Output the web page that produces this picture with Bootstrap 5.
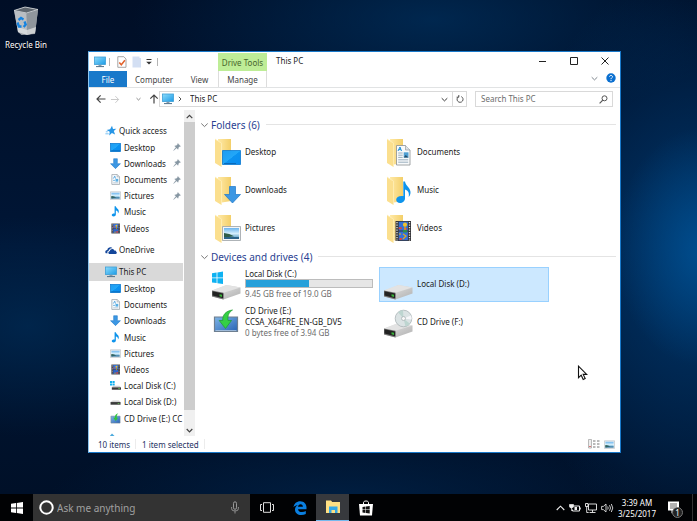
<!DOCTYPE html>
<html lang="en">
<head>
<meta charset="utf-8">
<meta name="viewport" content="width=device-width, initial-scale=1">
<title>This PC</title>
<link href="https://cdn.jsdelivr.net/npm/bootstrap@5.3.0/dist/css/bootstrap.min.css" rel="stylesheet">
<style>
html, body { height: 100%; }
body { font: 8px/11px "Noto Sans", "Open Sans", sans-serif; color: #1b1b1b; background: #001330; }
svg { display: block; flex: none; }
button, input { font: inherit; color: inherit; }
button { background: none; border: 0; padding: 0; }
a { color: inherit; text-decoration: none; }
ul { list-style: none; margin: 0; padding: 0; }
.desktop {
  background:
    radial-gradient(ellipse 90px 120px at 101% 50%, rgba(0,92,165,.6), transparent),
    radial-gradient(ellipse 190px 290px at 100% 52%, rgba(0,66,126,.75), transparent),
    radial-gradient(ellipse 300px 110px at 62% 4%, rgba(0,52,100,.65), transparent),
    radial-gradient(ellipse 170px 110px at 4% 66%, rgba(0,48,92,.6), transparent),
    radial-gradient(ellipse 300px 70px at 50% 101%, rgba(0,40,82,.6), transparent),
    linear-gradient(#000e26, #001636 50%, #001028);
}
.bin { width: 48px; left: 2px; top: 6px; gap: 1px; color: #fff; text-shadow: 0 1px 1px #000; }
.win { left: 88px; top: 51px; right: 76px; bottom: 41px; background: #fff; border: 1px solid #1979ca; border-left-color: #8cc5ef; }
.ribbon { height: 36px; border-bottom: 1px solid #e1e3e4; }
.quickbar { height: 19px; padding-left: 5px; gap: 5px; }
.sep { width: 1px; height: 8px; background: #b4b4b4; }
.quickbar .first { margin: 0 2px 0 -2px; }
.ribtabs { height: 16px; color: #444; }
.tab-file { width: 38px; background: #1979ca; color: #fff; }
.tab-plain { width: 54px; }
.tab-short { width: 37px; }
.tools { width: 49px; color: #47652c; }
.tools .cap { height: 18px; margin-top: 1px; background: #beed97; }
.tools .low { height: 16px; color: #444; border: solid #ddd; border-width: 0 1px; }
.wintitle { height: 17px; padding-left: 9px; }
.winbtn { width: 31px; height: 17px; }
.addr { height: 22px; padding: 0 7px 0 7px; }
.history { color: #444; }
.box { height: 16px; border: 1px solid #d9d9d9; }
.box input { border: 0; outline: 0; background: none; min-width: 0; padding: 0 0 1px; }
.box input::placeholder { color: #6d6d6d; opacity: 1; }
.place { margin-left: 2px; }
.search { width: 138px; margin-left: 8px; padding: 0 4px 0 5px; }
.refresh { width: 14px; border-left: 1px solid #d9d9d9; }
.side { width: 106px; }
.tree { padding-top: 12px; }
.tree li { min-height: 0; }
.tree a { padding: 0 2px 0 21px; gap: 3px; white-space: nowrap; height: 100%; overflow: hidden; }
.tree .top a { padding-left: 16px; gap: 2px; }
.tree .on { background: #d9d9d9; }
.tree .spaced { margin-top: 5px; }
.peek { height: 10px; overflow: hidden; padding: 6px 0 0 20px; }
.bar { width: 11px; background: #f0f0f0; margin-left: 1px; }
.thumb { background: #cdcdcd; margin-bottom: 14px; }
.arrow { height: 12px; }
.files { padding: 4px 4px 0 5px; }
.head { height: 21px; font-size: 10px; line-height: 20px; color: #2b3f92; gap: 2px; font-weight: 400; margin: 0; }
.rule { height: 1px; background: #e4e4e4; margin-left: 4px; }
.tiles { display: grid; grid-template-columns: repeat(auto-fill, 170px); gap: 3px 2px; padding-left: 7px; }
.tile { height: 35px; padding: 0 3px; gap: 4px; border: 1px solid transparent; text-align: left; min-width: 0; }
.tile.on { background: #cce8ff; border-color: #99d1ff; }
.tile .txt { min-width: 0; white-space: nowrap; padding-bottom: 2px; }
.tile .muted { color: #6d6d6d; }
.usage { height: 9px; border: 1px solid #bcbcbc; border-radius: 0; background: #e6e6e6; width: 128px; }
.usage .progress-bar { background: #26a0da; }
.status { height: 16px; padding: 0 5px 0 9px; color: #1e3264; }
.status .sep { background: #ececec; margin: 0 6px 0 5px; height: 10px; }
.taskbar { height: 27px; background: #010204; color: #fff; }
.tb { width: 33px; }
.tb.on { background: #37393d; border-bottom: 1px solid #76b9ed; }
.cortana { width: 217px; background: #333; padding: 0 11px 0 6px; gap: 3px; color: #a0a0a0; font-size: 10px; line-height: 16px; }
.cortana input { border: 0; outline: 0; background: none; padding: 0; min-width: 0; height: 18px; }
.cortana input::placeholder { color: #a0a0a0; opacity: 1; line-height: 16px; }
.tray { gap: 4px; }
.clock { width: 46px; text-align: center; margin-left: -4px; }
.notify { width: 24px; padding-left: 4px; }
.peekdesk { width: 5px; border-left: 1px solid #333; }
.count { left: 8px; top: 13px; width: 11px; height: 11px; border-radius: 50%; background: #222; border: 1px solid #777; line-height: 9px; text-align: center; }
.cursor { left: 577px; top: 365px; pointer-events: none; }
</style>
<script src="https://cdn.jsdelivr.net/npm/bootstrap@5.3.0/dist/js/bootstrap.bundle.min.js"></script>
</head>
<body>
<svg width="0" height="0" class="position-absolute" aria-hidden="true">
  <defs>
    <linearGradient id="gScreen" x1="0" y1="0" x2="1" y2="1"><stop offset="0" stop-color="#1e9cf0"/><stop offset=".5" stop-color="#22a7f8"/><stop offset=".52" stop-color="#0c93f0"/><stop offset="1" stop-color="#0a8cf0"/></linearGradient>
    <linearGradient id="gMon" x1="0" y1="0" x2="1" y2="1"><stop offset="0" stop-color="#8ddcfb"/><stop offset="1" stop-color="#1c9be6"/></linearGradient>
    <linearGradient id="gFold" x1="0" y1="0" x2="1" y2="0"><stop offset="0" stop-color="#ffe9a6"/><stop offset="1" stop-color="#f3cf69"/></linearGradient>
    <linearGradient id="gDrive" x1="0" y1="0" x2="1" y2="1"><stop offset="0" stop-color="#e9e9e9"/><stop offset="1" stop-color="#b0b0b0"/></linearGradient>
    <linearGradient id="gPic" x1="0" y1="0" x2="0" y2="1"><stop offset="0" stop-color="#6cb5ee"/><stop offset=".5" stop-color="#d4eefc"/><stop offset="1" stop-color="#3b8ab8"/></linearGradient>
    <linearGradient id="gBox" x1="0" y1="0" x2="1" y2="1"><stop offset="0" stop-color="#7fb5e6"/><stop offset="1" stop-color="#2763b5"/></linearGradient>
    <symbol id="pc" viewBox="0 0 12 11"><rect x=".5" y=".5" width="11" height="7.5" fill="url(#gMon)" stroke="#3c9fd6" stroke-width=".8"/><path d="M4.5 8.4h3v1.2h-3z" fill="#8b9ba8"/><path d="M2 9.6h8v1H2z" fill="#4f6f87"/></symbol>
    <symbol id="desk" viewBox="0 0 12 12"><rect x=".5" y="1.5" width="11" height="9" fill="url(#gScreen)" stroke="#0b78cf" stroke-width=".8"/><path d="M1 9.6h10" stroke="#0861ad" stroke-width=".8"/></symbol>
    <symbol id="down" viewBox="0 0 12 12"><path d="M4 .8h4v5.4h3.4L6 11.6.6 6.200H4z" fill="#3c97e3" stroke="#1c77c8" stroke-width=".6"/></symbol>
    <symbol id="doc" viewBox="0 0 12 12"><path d="M2 .6h6l2.400 2.400v8.400H2z" fill="#f7fafc" stroke="#8d959b" stroke-width=".7"/><path d="M7.800.6v2.600h2.600" fill="#dfe5e9" stroke="#8d959b" stroke-width=".5"/><path d="M3.600 5 5.200 2.400 6 5M3.500 7h1.800" stroke="#3092d8" stroke-width=".8" fill="none"/><path d="M6 5.300h3v3H6z" fill="#58aee4"/><path d="M3.500 9.600h5.500" stroke="#9cb4c6" stroke-width=".7"/></symbol>
    <symbol id="pic" viewBox="0 0 12 12"><path d="M.4 2h11.200v8.200H.4z" fill="#f4f6f7" stroke="#a9afb3" stroke-width=".6"/><path d="M1.500 3h9v6.200h-9z" fill="url(#gPic)"/><path d="M1.500 6.500q3 .2 5.500 1.600l-5.500 1.100z" fill="#2f5d49"/><path d="M1.500 8.700h9" stroke="#2f6c94" stroke-width=".9"/></symbol>
    <symbol id="note" viewBox="0 0 12 12"><path d="M5 .4h1.400c.2 2.300 3.600 2.900 3.200 5.900-.1.800-.5 1.500-1 2 .5-2-.6-2.900-2.200-3.300v4.300c0 1.300-1.200 2.200-2.500 2.200-1.200 0-2-.7-2-1.600C1.900 8.700 3.300 8 5 8.200z" fill="#0e94ec"/></symbol>
    <symbol id="vid" viewBox="0 0 12 12"><path d="M1.500.6h9.400v10.800H1.500z" fill="#3c3c40"/><path d="M2.500 1v10.200M9.900 1v10.200" stroke="#d7d7d7" stroke-width=".8" stroke-dasharray=".8 .9"/><path d="M3.500 1.100h5.400v4.700H3.500z" fill="#3a74d8"/><path d="M3.500 6.300h5.400v4.600H3.500z" fill="#2d62cc"/><path d="M3.500 3.800h1.700v1H3.500zM6.800 9h2v1.500h-2z" fill="#d84b3b"/><circle cx="7" cy="3" r="1.100" fill="#f0c22e"/><path d="M7 4.200v2.600M4.500 10h2" stroke="#c79a20" stroke-width=".9"/></symbol>
    <symbol id="drv" viewBox="0 0 12 12"><path d="M.6 6.600 3 4.800h6.600l1.900 1.800z" fill="#d2d2d2"/><path d="M.6 6.600h10.900v2.900H.6z" fill="#3a3a3a"/><path d="M8.400 7.700h1.800v.8H8.400z" fill="#67d352"/></symbol>
    <symbol id="drvw" viewBox="0 0 12 12"><path d="M0 1h2.300v2.200H0zM2.800 1h2.300v2.200H2.800zM0 3.700h2.300v2.200H0zM2.800 3.700h2.300v2.200H2.800z" fill="#10b0ee"/><path d="M2 8 3.500 6.400h6.700L12 8z" fill="#cfcfcf"/><path d="M2 8h10v2.600H2z" fill="#3a3a3a"/><path d="M9 9h1.800v.7H9z" fill="#67d352"/></symbol>
    <symbol id="cd" viewBox="0 0 12 12"><path d="M1 3.400h10V11H1z" fill="url(#gBox)" stroke="#7d8a96" stroke-width=".6"/><path d="M9 .4C6 1 5.300 3 5.300 5.300H3.500l2.700 3.400 2.600-3.400H7.300C7.200 3.200 7.600 1.600 9 .4z" fill="#2fc63b"/></symbol>
    <symbol id="star" viewBox="0 0 12 12"><path d="m7 .8 1 3.100 3.300-.1-2.500 2.300 1.300 3.500-3.200-1.700-2.700 2.500.5-3.600L1.600 5l3.500-.7z" fill="#2796e6"/><path d="M.4 8.800h3.300M.8 6.800h2" stroke="#5ab4f2" stroke-width=".8"/></symbol>
    <symbol id="cloud" viewBox="0 0 13 12"><path d="M.8 9.600C-.5 7.500 1 5.800 2.500 5.900 2.700 3 6.700 1.800 8.200 4.100 4.900 3.700 4.400 6.300 4.400 6.500 2.300 6.800 2.200 8.700 3 9.600z" fill="#13469a"/><path d="M4.300 10.200C2.900 8.800 4 7.100 5.300 7.300 5.500 4.500 9.200 4.200 10 6.500c1.600-.3 2.200.6 2.200 1.500 1 .5.800 2.200-.6 2.200z" fill="#13469a"/></symbol>
    <symbol id="pin" viewBox="0 0 8 8"><path d="M4.800.5 7.500 3.200 6.600 3.400 5.300 4.800 5.100 6.300 3.500 4.900.6 7.500 3 4.300 1.700 2.900 3.200 2.700 4.600 1.400z" fill="#8696a2" stroke="#8696a2" stroke-width=".4"/></symbol>
    <symbol id="fold" viewBox="0 0 30 32"><path d="M7 2h13v24l-12 2z" fill="url(#gFold)"/><path d="M4 2l6.500 4.200V30L4 26z" fill="#fbdf8e"/><path d="M4 2l6.500 4.200V30" fill="none" stroke="#fff0bd" stroke-width=".7"/></symbol>
    <symbol id="hdd" viewBox="0 0 30 32"><path d="M1 21.500 15.500 16 29.500 18.500V24.500L12.500 30.500 1 27.500z" fill="url(#gDrive)"/><path d="M1 21.500 15.500 16 29.500 18.500 12.500 23.800z" fill="#e3e3e3"/><path d="M1 21.500 12.500 23.800V30.500L1 27.500z" fill="#777"/><path d="M1.500 22.300 12.200 24.600V29.300L1.500 26.600z" fill="#222"/><path d="M8.500 25.200 11 25.800V27.900L8.500 27.200z" fill="#38b338"/></symbol>
    <symbol id="chev" viewBox="0 0 8 8"><path d="M.8 2.500 4 5.600 7.200 2.500" fill="none" stroke="currentColor" stroke-width="1"/></symbol>
    <symbol id="arr" viewBox="0 0 10 10"><path d="M9.500 5H1M4.600 1.300 1 5l3.600 3.700" fill="none" stroke="currentColor" stroke-width="1.200"/></symbol>
    <symbol id="folder-bar" viewBox="0 0 16 14"><path d="M1 .5h5l1.200 1.400H15v11H1z" fill="#ffe083"/><path d="M4 6.500h8.500v6.500H10V10H6.500v3H4z" fill="#35a8e6"/></symbol>
  </defs>
</svg>

<div class="vh-100 d-flex flex-column overflow-hidden">
<main class="desktop flex-grow-1 position-relative">
  <a href="#" class="bin position-absolute d-flex flex-column align-items-center">
    <svg width="28" height="32" viewBox="0 0 28 32"><path d="M2 4.500 13 1 26 3.500 23 28 9.500 29 6 26z" fill="#9da3aa"/><path d="M2 4.500 13 1 26 3.500 14.500 7z" fill="#5e666e" stroke="#d5d9dc" stroke-width=".8"/><path d="M2.300 5 14.500 7.500 16 29 6 26z" fill="#b9bec3"/><path d="M14.500 7.500 26 4 23 27 15 29z" fill="#8f969d"/><path d="M5.800 21 15 24 24 21 23 27 15 29 6 26z" fill="#dfe1e3" opacity=".75"/><path d="m6.500 14 2.500-2 2.500 1.500M5.500 16.500 7 20.500h2.500M12.500 15.500l1.200 3-2 2.500" fill="none" stroke="#1583e0" stroke-width="2.300"/></svg>
    <span class="text-nowrap">Recycle Bin</span>
  </a>

  <section class="win position-absolute d-flex flex-column" aria-label="This PC">
    <header class="ribbon d-flex">
      <div class="d-flex flex-column">
        <div class="quickbar d-flex align-items-center">
          <svg width="12" height="12"><use href="#pc"/></svg>
          <span class="sep first"></span>
          <button type="button" aria-label="Properties"><svg width="10" height="12" viewBox="0 0 10 12"><path d="M.8.700h6L9 3v8.300H.8z" fill="#fff" stroke="#8f8f8f" stroke-width=".8"/><path d="m2.300 6.500 2 2.300 3.600-4.600" fill="none" stroke="#e2622c" stroke-width="1.500"/></svg></button>
          <button type="button" aria-label="New folder"><svg width="9" height="12" viewBox="0 0 9 12"><path d="M.5.500h7V2H9v9.500H.5z" fill="#d3dff3"/></svg></button>
          <button type="button" aria-label="Customize"><svg width="6" height="8" viewBox="0 0 6 8"><path d="M.5 1.500h5" stroke="#333"/><path d="M.2 3.800h5.600L3 6.500z" fill="#333"/></svg></button>
          <span class="sep"></span>
        </div>
        <nav class="ribtabs d-flex text-center">
          <button type="button" class="tab-file">File</button>
          <button type="button" class="tab-plain">Computer</button>
          <button type="button" class="tab-short">View</button>
        </nav>
      </div>
      <div class="tools text-center d-flex flex-column">
        <div class="cap d-flex align-items-center justify-content-center">Drive Tools</div>
        <button type="button" class="low">Manage</button>
      </div>
      <div class="flex-grow-1 d-flex flex-column justify-content-between">
        <div class="wintitle d-flex align-items-center">
          <span class="flex-grow-1">This PC</span>
          <button type="button" class="winbtn d-flex align-items-center justify-content-center" aria-label="Minimize"><svg width="8" height="8"><path d="M0 4.500h7" stroke="#222"/></svg></button>
          <button type="button" class="winbtn d-flex align-items-center justify-content-center" aria-label="Maximize"><svg width="8" height="8"><path d="M.5.500h7v7h-7z" fill="none" stroke="#222"/></svg></button>
          <button type="button" class="winbtn d-flex align-items-center justify-content-center" aria-label="Close"><svg width="8" height="8"><path d="m.5.500 7 7m0-7-7 7" stroke="#222"/></svg></button>
        </div>
        <div class="d-flex justify-content-end align-items-center gap-2 h-50 text-secondary">
          <button type="button" aria-label="Collapse ribbon"><svg width="7" height="7"><use href="#chev"/></svg></button>
          <button type="button" class="me-1" aria-label="Help"><svg width="10" height="10" viewBox="0 0 10 10"><circle cx="5" cy="5" r="4.700" fill="#0a6fd0"/><path d="M3.600 3.800c0-2 2.900-1.700 2.900 0C6.500 4.800 5 4.800 5 6.200M5 7v1.100" stroke="#fff" fill="none"/></svg></button>
        </div>
      </div>
    </header>

    <div class="addr d-flex align-items-center">
      <div class="history d-flex align-items-center">
        <button type="button" aria-label="Back"><svg width="10" height="10"><use href="#arr"/></svg></button>
        <button type="button" aria-label="Forward" class="ms-1"><svg width="10" height="9" color="#c4c4c4" viewBox="0 0 10 10"><path d="M.5 5H9M5.400 1.300 9 5 5.400 8.700" fill="none" stroke="currentColor"/></svg></button>
        <button type="button" aria-label="Recent" class="ms-3 me-2"><svg width="5" height="6"><use href="#chev"/></svg></button>
        <button type="button" aria-label="Up"><svg width="10" height="10" viewBox="0 0 10 10"><path d="M5 9.500V1M1.300 4.600 5 1l3.700 3.600" fill="none" stroke="#444" stroke-width="1.200"/></svg></button>
      </div>
      <div class="box flex-grow-1 d-flex align-items-center">
        <svg class="place" width="12" height="12"><use href="#pc"/></svg>
        <svg class="mx-1" width="4" height="6" viewBox="0 0 4 6"><path d="m.8.800 2.200 2.200L.8 5.200" fill="none" stroke="#555"/></svg>
        <input type="text" class="flex-grow-1 ms-1" value="This PC" aria-label="Address">
        <button type="button" class="me-1" aria-label="Previous locations"><svg width="7" height="7"><use href="#chev"/></svg></button>
        <button type="button" class="refresh h-100 d-flex align-items-center justify-content-center" aria-label="Refresh"><svg width="8" height="8" viewBox="0 0 8 8"><path d="M5.300 1.600A3 3 0 1 1 2.600 1.700M2.800 0v2.200H.6" fill="none" stroke="#555"/></svg></button>
      </div>
      <div class="box search d-flex align-items-center">
        <input type="search" class="flex-grow-1" placeholder="Search This PC" aria-label="Search This PC">
        <svg width="9" height="9" viewBox="0 0 9 9"><circle cx="5.500" cy="3.300" r="2.500" fill="none" stroke="#555"/><path d="M3.800 5.200.6 8.400" stroke="#555" stroke-width="1.200"/></svg>
      </div>
    </div>

    <div class="flex-grow-1 d-flex overflow-hidden">
      <aside class="side d-flex flex-shrink-0">
        <div class="flex-grow-1 d-flex flex-column overflow-hidden">
          <ul class="tree flex-grow-1 d-flex flex-column">
            <li class="top flex-fill"><a href="#" class="d-flex align-items-center"><svg width="12" height="12"><use href="#star"/></svg>Quick access</a></li>
            <li class="flex-fill"><a href="#" class="d-flex align-items-center"><svg width="11" height="11"><use href="#desk"/></svg><span class="flex-grow-1">Desktop</span><svg width="8" height="8"><use href="#pin"/></svg></a></li>
            <li class="flex-fill"><a href="#" class="d-flex align-items-center"><svg width="11" height="11"><use href="#down"/></svg><span class="flex-grow-1">Downloads</span><svg width="8" height="8"><use href="#pin"/></svg></a></li>
            <li class="flex-fill"><a href="#" class="d-flex align-items-center"><svg width="11" height="11"><use href="#doc"/></svg><span class="flex-grow-1">Documents</span><svg width="8" height="8"><use href="#pin"/></svg></a></li>
            <li class="flex-fill"><a href="#" class="d-flex align-items-center"><svg width="11" height="11"><use href="#pic"/></svg><span class="flex-grow-1">Pictures</span><svg width="8" height="8"><use href="#pin"/></svg></a></li>
            <li class="flex-fill"><a href="#" class="d-flex align-items-center"><svg width="11" height="11"><use href="#note"/></svg>Music</a></li>
            <li class="flex-fill"><a href="#" class="d-flex align-items-center"><svg width="11" height="11"><use href="#vid"/></svg>Videos</a></li>
            <li class="top spaced flex-fill"><a href="#" class="d-flex align-items-center"><svg width="12" height="12"><use href="#cloud"/></svg>OneDrive</a></li>
            <li class="top spaced flex-fill on"><a href="#" class="d-flex align-items-center" aria-current="page"><svg width="12" height="12"><use href="#pc"/></svg>This PC</a></li>
            <li class="flex-fill"><a href="#" class="d-flex align-items-center"><svg width="11" height="11"><use href="#desk"/></svg>Desktop</a></li>
            <li class="flex-fill"><a href="#" class="d-flex align-items-center"><svg width="11" height="11"><use href="#doc"/></svg>Documents</a></li>
            <li class="flex-fill"><a href="#" class="d-flex align-items-center"><svg width="11" height="11"><use href="#down"/></svg>Downloads</a></li>
            <li class="flex-fill"><a href="#" class="d-flex align-items-center"><svg width="11" height="11"><use href="#note"/></svg>Music</a></li>
            <li class="flex-fill"><a href="#" class="d-flex align-items-center"><svg width="11" height="11"><use href="#pic"/></svg>Pictures</a></li>
            <li class="flex-fill"><a href="#" class="d-flex align-items-center"><svg width="11" height="11"><use href="#vid"/></svg>Videos</a></li>
            <li class="flex-fill"><a href="#" class="d-flex align-items-center"><svg width="11" height="11"><use href="#drvw"/></svg>Local Disk (C:)</a></li>
            <li class="flex-fill"><a href="#" class="d-flex align-items-center"><svg width="11" height="11"><use href="#drv"/></svg>Local Disk (D:)</a></li>
            <li class="flex-fill"><a href="#" class="d-flex align-items-center"><svg width="11" height="11"><use href="#cd"/></svg>CD Drive (E:) CC</a></li>
          </ul>
          <div class="peek"><svg width="7" height="6" viewBox="0 0 7 6"><path d="M0 5 3 1.500 6.500 5z" fill="#4ba9dc"/></svg></div>
        </div>
        <div class="bar d-flex flex-column">
          <button type="button" class="arrow d-flex align-items-center justify-content-center" aria-label="Scroll up"><svg width="7" height="7" viewBox="0 0 8 8"><path d="M.8 5.800 4 2.600l3.200 3.200" fill="none" stroke="#444" stroke-width="1.400"/></svg></button>
          <div class="thumb flex-grow-1"></div>
          <button type="button" class="arrow d-flex align-items-center justify-content-center" aria-label="Scroll down"><svg width="7" height="7" viewBox="0 0 8 8"><path d="M.8 2.300 4 5.500l3.200-3.200" fill="none" stroke="#444" stroke-width="1.400"/></svg></button>
        </div>
      </aside>

      <div class="files flex-grow-1">
        <h2 class="head d-flex align-items-center"><svg width="9" height="8" color="#777"><use href="#chev"/></svg>Folders (6)<span class="rule flex-grow-1"></span></h2>
        <div class="tiles">
          <button type="button" class="tile d-flex align-items-center"><svg width="30" height="32" viewBox="0 0 30 32"><use href="#fold" width="30" height="32"/><path d="M11.500 13.500h18v14h-18z" fill="url(#gScreen)" stroke="#0b78cf" stroke-width=".8"/><path d="M13 26.500h12" stroke="#0861ad" stroke-width=".8"/></svg><span class="txt">Desktop</span></button>
          <button type="button" class="tile d-flex align-items-center"><svg width="30" height="32" viewBox="0 0 30 32"><use href="#fold" width="30" height="32"/><path d="M13.500 8.500h9l4.500 4.500v15H13.500z" fill="#f8fafb" stroke="#8a8f93" stroke-width=".8"/><path d="M22.500 8.500V13H27" fill="#dde3e7" stroke="#8a8f93" stroke-width=".6"/><path d="m15 14 2-4 1.500 4M15.800 12.600h2" stroke="#1f8fd8" fill="none"/><path d="M15.200 16h4.500M15.200 18.200h4.500M15.200 20.400h4.500M15.200 22.800h10M15.200 25.200h10" stroke="#8fa5b5" stroke-width=".9"/><path d="M20.700 15.300h4.800v5.300h-4.800z" fill="#4f9fd2"/><path d="m20.700 20.600 2-2.600 2.800 2.600z" fill="#264f6b"/></svg><span class="txt">Documents</span></button>
          <button type="button" class="tile d-flex align-items-center"><svg width="30" height="32" viewBox="0 0 30 32"><use href="#fold" width="30" height="32"/><path d="M18.500 11.500h6v8H29.500L21.500 28 13.500 19.500h5z" fill="#3c97e3" stroke="#1c77c8" stroke-width=".7"/></svg><span class="txt">Downloads</span></button>
          <button type="button" class="tile d-flex align-items-center"><svg width="30" height="32" viewBox="0 0 30 32"><use href="#fold" width="30" height="32"/><path d="M20.300 6.500H22C22.500 11 28 13 27.500 18c-.2 2-1 3.300-1.800 4 .8-4.300-.5-6.200-3.700-7.500v9c0 2.700-2.500 4.500-5 4.500-2.300 0-3.800-1.400-3.800-3.200 0-2.700 3-4.300 7.100-3.700z" fill="#0e94ec"/></svg><span class="txt">Music</span></button>
          <button type="button" class="tile d-flex align-items-center"><svg width="30" height="32" viewBox="0 0 30 32"><use href="#fold" width="30" height="32"/><path d="M11.500 13.500h18v14H11.500z" fill="#f3f5f6" stroke="#9aa1a6" stroke-width=".8"/><path d="M13 15h15v11H13z" fill="url(#gPic)"/><path d="M13 20q5.500.5 10 3.200L13 24.700z" fill="#2f5d49"/><path d="M13 25h15" stroke="#2b6389" stroke-width="2"/></svg><span class="txt">Pictures</span></button>
          <button type="button" class="tile d-flex align-items-center"><svg width="30" height="32" viewBox="0 0 30 32"><use href="#fold" width="30" height="32"/><path d="M12.500 8h15.500v20H12.500z" fill="#343438"/><path d="M14 9v18.500M26.500 9v18.500" stroke="#e2e2e2" stroke-width="1.300" stroke-dasharray="1.200 1.300"/><path d="M15.700 8.700h9.200v8.700h-9.200zM15.700 18.600h9.200v8.700h-9.200z" fill="#3470d8"/><path d="M15.700 14.200h3v2h-3zM21 15h3v1.600h-3zM16.500 25h2.500v2h-2.500z" fill="#d8463b"/><circle cx="22" cy="11.700" r="2.100" fill="#f0c22e"/><path d="M22 13v5M20 21l3 2-3 3M17 20v2" stroke="#e0a922" stroke-width="1.200" fill="none"/><path d="M20 17h4v2.500h-4z" fill="#2f8f4b"/></svg><span class="txt">Videos</span></button>
        </div>
        <h2 class="head d-flex align-items-center"><svg width="9" height="8" color="#777"><use href="#chev"/></svg>Devices and drives (4)<span class="rule flex-grow-1"></span></h2>
        <div class="tiles">
          <button type="button" class="tile d-flex align-items-center"><svg width="30" height="32" viewBox="0 0 30 32"><use href="#hdd" width="30" height="32"/><path d="m1 4.200 4.600-.7v4.900H1zM6.400 3.400l5.600-.8v5.800H6.400zM1 9.200h4.600v4.900L1 13.400zM6.400 9.200H12V15l-5.600-.8z" fill="#0fb2f2"/></svg><span class="txt"><span class="d-block">Local Disk (C:)</span><span class="progress usage" role="progressbar" aria-label="Space used" aria-valuenow="50" aria-valuemin="0" aria-valuemax="100"><span class="progress-bar" style="width:50%"></span></span><span class="d-block muted">9.45 GB free of 19.0 GB</span></span></button>
          <button type="button" class="tile on d-flex align-items-center"><svg width="30" height="32" viewBox="0 0 30 32"><use href="#hdd" width="30" height="32"/></svg><span class="txt">Local Disk (D:)</span></button>
          <button type="button" class="tile d-flex align-items-center"><svg width="30" height="32" viewBox="0 0 30 32"><path d="M3.500 10h23v14.500h-23z" fill="url(#gBox)" stroke="#6e7f90" stroke-width="1.200"/><path d="M4.500 23.500h21" stroke="#b8cbe0" stroke-width=".8"/><path d="M21.500 3C14.500 4 11.500 8 11.700 13.500H8.200L14.500 21.500 20.500 13.500H17C16.500 9 17.500 5.500 21.500 3z" fill="#35cf45" stroke="#1d9c2c" stroke-width=".7"/></svg><span class="txt"><span class="d-block">CD Drive (E:)</span><span class="d-block">CCSA_X64FRE_EN-GB_DV5</span><span class="d-block muted">0 bytes free of 3.94 GB</span></span></button>
          <button type="button" class="tile d-flex align-items-center"><svg width="30" height="32" viewBox="0 0 30 32"><use href="#hdd" width="30" height="32"/><circle cx="20.500" cy="11.500" r="8.300" fill="#dbe3e4" stroke="#aab3b5" stroke-width=".8"/><path d="M20.500 11.500 15 5.300a8 8 0 0 1 5-2zM20.500 11.500l6.500 5.200a8 8 0 0 1-4.500 2.800z" fill="#bdd5d0"/><path d="M20.500 11.500 28 8.500a8 8 0 0 1 .6 4z" fill="#f7f7fa"/><circle cx="20.500" cy="11.500" r="2" fill="#f8f8f8" stroke="#a3adaf" stroke-width=".7"/></svg><span class="txt">CD Drive (F:)</span></button>
        </div>
      </div>
    </div>

    <footer class="status d-flex align-items-center">
      <span>10 items</span><span class="sep"></span><span>1 item selected</span><span class="sep"></span>
      <button type="button" class="ms-auto" aria-label="Details view"><svg width="12" height="10" viewBox="0 0 12 10"><path d="M.5.500h3v8.500h-3z" fill="#eee" stroke="#aaa" stroke-width=".8"/><path d="M5 2h2.500M5 5h2.500M5 8h2.500M9 2h2.500M9 5h2.500M9 8h2.500" stroke="#777"/><path d="M1 7.500h2" stroke="#d77"/></svg></button>
      <button type="button" class="ms-1" aria-label="Large icons view"><svg width="11" height="11"><use href="#pic"/></svg></button>
    </footer>
  </section>

  <svg class="cursor position-absolute" width="11" height="16" viewBox="0 0 11 16"><path d="M1.500 1.200v11.500l2.700-2.500 2 4.300 2-1-2-4.100h3.500z" fill="#fff" stroke="#111" stroke-width="1.100"/></svg>
</main>

<footer class="taskbar d-flex flex-shrink-0">
  <button type="button" class="tb d-flex align-items-center justify-content-center" aria-label="Start"><svg width="12" height="12" viewBox="0 0 12 12"><path d="M0 1.700 5 1v4.600H0zM5.800.900 12 0v5.600H5.800zM0 6.400h5V11l-5-.7zM5.800 6.400H12V12l-6.200-.9z" fill="#fff"/></svg></button>
  <div class="cortana d-flex align-items-center">
    <svg width="15" height="15"><circle cx="7.500" cy="7.500" r="6.200" fill="none" stroke="#fff" stroke-width="2"/></svg>
    <input type="text" class="flex-grow-1" placeholder="Ask me anything" aria-label="Ask me anything">
    <svg width="8" height="13" viewBox="0 0 8 13"><rect x="2.500" y=".8" width="3" height="7.500" rx="1.500" fill="none" stroke="#999"/><path d="M.6 6v1.500a2.300 2.300 0 0 0 2.300 2.300h2.200a2.300 2.300 0 0 0 2.300-2.300V6M4 10v2.500" fill="none" stroke="#999" stroke-width=".9"/></svg>
  </div>
  <button type="button" class="tb d-flex align-items-center justify-content-center" aria-label="Task view"><svg width="14" height="11" viewBox="0 0 14 11"><path d="M3.500.700h7v9.600h-7zM2 2.500H.5v6H2M12 2.500h1.500v6H12" fill="none" stroke="#ddd"/></svg></button>
  <button type="button" class="tb d-flex align-items-center justify-content-center" aria-label="Edge"><svg width="14" height="14" viewBox="0 0 14 14"><path d="M.5 6.300C1 2.500 3.800.300 7.200.300c4 0 6.300 2.900 6.300 6.300v1.600H5c.2 2 2 2.900 4 2.900 1.500 0 2.700-.4 3.800-1v3C11.600 13.700 10 14 8.300 14 4.600 14 2 11.800 2 8.700 2 6.600 3.200 5 5 4.100 3.200 4.300 1.700 5 .5 6.300zM5 5.700h4.900c0-1.600-.9-2.500-2.300-2.500C6.200 3.200 5.200 4.200 5 5.700z" fill="#0a7fe0"/></svg></button>
  <button type="button" class="tb on d-flex align-items-center justify-content-center" aria-label="File Explorer"><svg width="16" height="14"><use href="#folder-bar"/></svg></button>
  <button type="button" class="tb d-flex align-items-center justify-content-center" aria-label="Store"><svg width="14" height="16" viewBox="0 0 14 16"><path d="M4.500 4V2.500C4.500.500 9.500.500 9.500 2.500V4" fill="none" stroke="#fff"/><path d="M0 4h14l-1 11.500H1z" fill="#fff"/><path d="m3.500 7 3-.4v2.900h-3zM7 6.500l3.700-.5v3.500H7zM3.500 10h3v2.900l-3-.4zM7 10h3.700v3.500L7 13z" fill="#111"/></svg></button>
  <div class="tray ms-auto d-flex align-items-center">
    <svg width="9" height="8" viewBox="0 0 9 8"><path d="m.7 6 3.800-3.800L8.300 6" fill="none" stroke="#eee" stroke-width="1.100"/></svg>
    <svg width="12" height="10" viewBox="0 0 12 10"><path d="M4.500 3h6v5H3.500V6.500M11.300 4.500v2" fill="none" stroke="#eee"/><path d="M5.500 4h2.500v3H5.500z" fill="#eee"/><path d="M.5 1.500h4v2.300L3.300 5H1.700L.5 3.800zM2.500 5v3" fill="#eee" stroke="#eee" stroke-width=".7"/></svg>
    <svg width="12" height="12" viewBox="0 0 12 12"><path d="M3.500 2h8v6h-8zM7.500 8v2.500M4.500 10.500h6M.5 1.500h2.500v3H.5zM1.700 4.500v6h2" fill="none" stroke="#eee" stroke-width=".9"/></svg>
    <svg width="13" height="10" viewBox="0 0 13 10"><path d="M.6 3.400h1.800L5 1v8L2.400 6.600H.6zM6.700 3.500q1 1.500 0 3M8.500 2.200q2 2.800 0 5.600M10.300 1q3 4 0 8" fill="none" stroke="#ddd" stroke-width=".9"/></svg>
    <div class="clock"><div>3:39 AM</div><div>3/25/2017</div></div>
    <button type="button" class="notify h-100 position-relative text-white" aria-label="Notifications"><svg width="11" height="13" viewBox="0 0 11 13"><path d="M0 .5h11v9H6.500L3.500 12.500v-3H0z" fill="#fff"/><path d="M2 3h7M2 5h7M2 7h5" stroke="#222" stroke-width=".7"/></svg><span class="count position-absolute">1</span></button>
    <span class="peekdesk h-100"></span>
  </div>
</footer>
</div>
</body>
</html>
